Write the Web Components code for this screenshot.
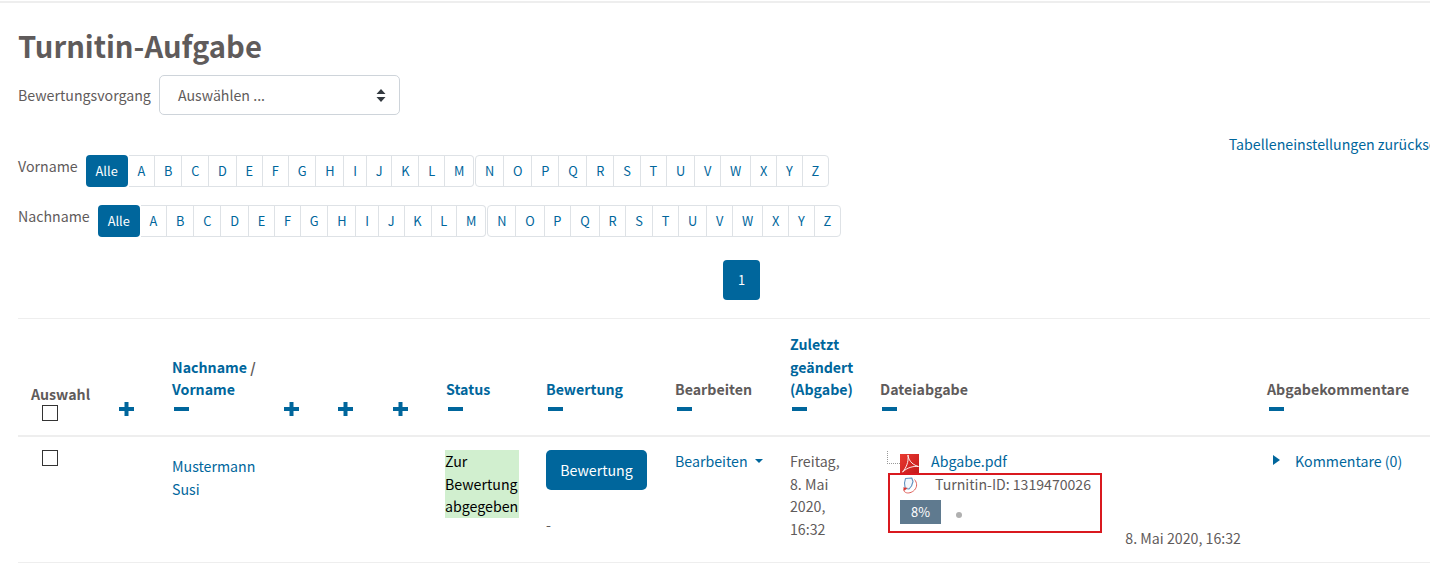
<!DOCTYPE html>
<html lang="de"><head><meta charset="utf-8"><title>Turnitin-Aufgabe</title>
<style>
html,body{margin:0;padding:0;background:#fff;overflow:hidden;height:568px}
body{font:14.2px/22.5px "Noto Sans CJK SC","Noto Sans",sans-serif;color:#5f5b5b;width:1430px}
a{color:#00669c;text-decoration:none}
</style></head><body>
<grade-page>
  <page-title>Turnitin-Aufgabe</page-title>
  <grade-select label="Bewertungsvorgang">Auswählen ...</grade-select>
  <reset-link>Tabelleneinstellungen zurücksetzen</reset-link>
  <initials-bar label="Vorname"></initials-bar>
  <initials-bar label="Nachname"></initials-bar>
  <page-pager>1</page-pager>
  <grade-table>
    <head-cell><span>Auswahl</span><box-check slot="after" head></box-check></head-cell>
    <head-cell toggle="plus"></head-cell>
    <head-cell toggle="minus"><a href="#">Nachname</a> /<br><a href="#">Vorname</a></head-cell>
    <head-cell toggle="plus"></head-cell>
    <head-cell toggle="plus"></head-cell>
    <head-cell toggle="plus"></head-cell>
    <head-cell toggle="minus"><a href="#">Status</a></head-cell>
    <head-cell toggle="minus"><a href="#">Bewertung</a></head-cell>
    <head-cell toggle="minus">Bearbeiten</head-cell>
    <head-cell toggle="minus"><a href="#">Zuletzt geändert (Abgabe)</a></head-cell>
    <head-cell toggle="minus">Dateiabgabe</head-cell>
    <head-cell toggle="minus">Abgabekommentare</head-cell>

    <body-cell><box-check></box-check></body-cell>
    <body-cell></body-cell>
    <body-cell><name-link>Mustermann<br>Susi</name-link></body-cell>
    <body-cell></body-cell>
    <body-cell></body-cell>
    <body-cell></body-cell>
    <body-cell><status-flag>Zur Bewertung abgegeben</status-flag></body-cell>
    <body-cell><grade-button>Bewertung</grade-button></body-cell>
    <body-cell><edit-menu>Bearbeiten</edit-menu></body-cell>
    <body-cell>Freitag, 8.&nbsp;Mai 2020, 16:32</body-cell>
    <body-cell><file-submission name="Abgabe.pdf" tid="Turnitin-ID: 1319470026" score="8%" date="8. Mai 2020, 16:32"></file-submission></body-cell>
    <body-cell><comment-toggle>Kommentare (0)</comment-toggle></body-cell>
  </grade-table>
</grade-page>
<script>
const def=(name,css,html,init)=>{customElements.define(name,class extends HTMLElement{
  connectedCallback(){ if(this.shadowRoot) return;
    const r=this.attachShadow({mode:'open'});
    r.innerHTML='<style>'+css+'</style>'+(typeof html==='function'?html(this):html);
    init&&init(r,this);}
});};
const BLUE='#00669c';
def('grade-page',':host{display:block;width:1447px;padding:0 0 0 18px;position:relative}.rule{height:2px;background:#eeeeee;margin:1px 0 0 -18px;width:1465px}','<div class="rule"></div><slot></slot>');
def('page-title',':host{display:block;font-size:29.2px;font-weight:700;line-height:38px;color:#5f5b5b;margin-top:23px}','<slot></slot>');
def('grade-select',':host{display:flex;align-items:center;gap:8px;margin-top:11px;height:40px}.s{box-sizing:border-box;width:241px;height:40px;border:1px solid #ced4da;border-radius:5px;display:flex;align-items:center;justify-content:space-between;padding:0 13px 0 18px;color:#5f5b5b}svg{display:block}',
 t=>`<span>${t.getAttribute('label')}</span><div class="s"><span><slot></slot></span><svg width="10" height="13" viewBox="0 0 10 13"><path d="M5 0 9.500 5H.5zM5 13 .5 8h9z" fill="#343a40"/></svg></div>`);
def('reset-link',':host{display:block;text-align:right;margin-top:17.5px;color:#00669c;white-space:nowrap}','<slot></slot>');
const L1='ABCDEFGHIJKLM'.split(''),L2='NOPQRSTUVWXYZ'.split('');
def('initials-bar',`:host{display:flex;height:32px;margin-bottom:18px;align-items:stretch}
.l{margin-right:8px;line-height:22px}
.all{box-sizing:border-box;background:${BLUE};color:#fff;border-radius:4px;width:42px;display:flex;align-items:center;justify-content:center;font-size:12.8px}
.g{display:flex;border:1px solid #dee2e6;border-radius:4px;margin-left:1px}.g:first-of-type{margin-left:0}
.g span{display:flex;align-items:center;justify-content:center;padding:0 8.87px;font-size:12.8px;color:${BLUE};border-left:1px solid #dee2e6}
.g span:first-child{border-left:0}`,
 t=>{const w=a=>a.map(c=>`<span>${c}</span>`).join('');return `<div class="l">${t.getAttribute('label')}</div><div class="all">Alle</div><div class="g" style="border-left:0;border-radius:0 4px 4px 0">${w(L1)}</div><div class="g">${w(L2)}</div>`});
def('page-pager',`:host{display:flex;justify-content:center;margin-top:23px}.p{width:37px;height:40px;border-radius:4px;background:${BLUE};color:#fff;display:flex;align-items:center;justify-content:center;font-size:12.8px}`,'<div class="p"><slot></slot></div>');
def('grade-table',':host{display:block;margin-top:18px;border-top:1px solid #eeeeee}.g{display:grid;grid-template-columns:88px 53px 112px 54px 55px 53px 100px 129px 115px 90px 387px 1fr;grid-template-rows:118px 126px}','<div class="g"><slot></slot></div>');
def('toggle-icon',':host{display:block;width:15px;height:14px}svg{display:block}',
 t=>`<svg width="15" height="14" viewBox="0 0 15 14"><path d="${t.getAttribute('kind')==='plus'?'M5.5 0h4v5h5.5v4H9.5v5h-4V9H0V5h5.5z':'M0 5h15v4H0z'}" fill="${BLUE}"/></svg>`);
def('head-cell',':host{display:flex;flex-direction:column;justify-content:flex-end;padding:0 13px 19px;border-bottom:2px solid #eeeeee;font-weight:700;box-sizing:border-box;min-width:0}.i{margin-top:1.5px}.m{margin-left:1.5px}.t{display:block}',
 t=>{const k=t.getAttribute('toggle');return `<div class="t"><slot></slot></div><slot name="after"></slot>${k?`<toggle-icon class="i ${k==='minus'?'m':''}" kind="${k}"></toggle-icon>`:''}`});
def('box-check',':host{display:block;box-sizing:border-box;width:16px;height:16px;border:1.5px solid #333;margin-left:11px;background:#fff}:host([head]){margin-bottom:-5px}','');
def('body-cell',':host{display:block;padding:13px 13px 0;border-bottom:1px solid #eeeeee;box-sizing:border-box;position:relative;min-width:0}','<slot></slot>');
def('name-link',`:host{display:block;color:${BLUE};margin-top:5px}`,'<slot></slot>');
def('status-flag',':host{display:block;background:#d1efcf;color:#000;margin-left:-1px;width:74px}','<slot></slot>');
def('grade-button',`:host{display:block}.b{display:flex;width:101px;height:40px;align-items:center;justify-content:center;background:${BLUE};color:#fff;border-radius:5px}.d{margin-top:23px}`,'<div class="b"><slot></slot></div><div class="d">-</div>');
def('edit-menu',`:host{display:flex;align-items:center;color:${BLUE};gap:7px;white-space:nowrap}i{display:block;border:4px solid transparent;border-top-color:${BLUE};border-bottom:0}`,'<span><slot></slot></span><i></i>');
def('comment-toggle',`:host{display:flex;align-items:center;color:${BLUE};white-space:nowrap}i{display:block;border:5px solid transparent;border-left:7px solid ${BLUE};border-right:0;margin:0 15px 2px 6px}`,'<i></i><span><slot></slot></span>');
def('file-submission',`:host{display:block;position:relative}
.r{display:flex;height:22.5px;align-items:flex-start}
.tree{box-sizing:border-box;width:13px;height:13px;margin-left:7px;border-left:1px dotted #999;border-bottom:1px dotted #999;margin-top:1px;flex:none}
.pdf{display:block;flex:none;margin-top:4px}
.name{color:${BLUE};margin-left:12px}
.tii{display:block;flex:none;margin:4px 0 0 22px}
.id{margin-left:17px;font-size:14.1px}
.sim{display:flex;align-items:center;margin:5px 0 0 20px;height:24px}
.sc{width:41px;height:24px;background:#5f7a8f;color:#fff;font-size:12.8px;line-height:23px;text-align:center}
.dot{width:6px;height:6px;border-radius:50%;background:#b0b0b0;margin:5px 0 0 15px}
.dt{text-align:right;margin-top:3px}
.mark{position:absolute;left:8px;top:23px;width:214px;height:60px;box-sizing:border-box;border:2px solid #d9191f;pointer-events:none}`,
 t=>`<div class="r"><div class="tree"></div>
 <svg class="pdf" width="19" height="19" viewBox="0 0 19 19"><defs><linearGradient id="p" x1="0" y1="0" x2="1" y2="1"><stop offset="0" stop-color="#ea3a30"/><stop offset="1" stop-color="#c3191c"/></linearGradient></defs><rect width="19" height="19" fill="url(#p)"/><path d="M8 1c.3 4 3 9.500 10.500 11.500-4.500-.5-10.500.5-16 5.500C6 14 8.800 8.500 8 1z" fill="none" stroke="#fff" stroke-width=".9"/></svg>
 <span class="name">${t.getAttribute('name')}</span></div>
 <div class="r"><svg class="tii" width="16" height="18" viewBox="0 0 16 18"><path d="M3.500 1.500 9.800 1 11 4.500 9.500 9 7 12 3.200 11.500 2.500 6z" fill="#f4f8fc" stroke="#5f90bf" stroke-width="1.100" stroke-linejoin="round"/><path d="M12.500 2.500c2.800 3.200 2.800 7.500 0 10.500-2.600 2.700-6.500 3.700-9 2.400C2 14.600 1.500 13.300 1.800 12" fill="none" stroke="#e0605a" stroke-width="1"/><path d="M1 10.500 5.500 10.800 2.600 13.800z" fill="#d8322c"/></svg><span class="id">${t.getAttribute('tid')}</span></div>
 <div class="sim"><div class="sc">${t.getAttribute('score')}</div><div class="dot"></div></div>
 <div class="dt">${t.getAttribute('date')}</div><div class="mark"></div>`);
</script>
</body></html>
